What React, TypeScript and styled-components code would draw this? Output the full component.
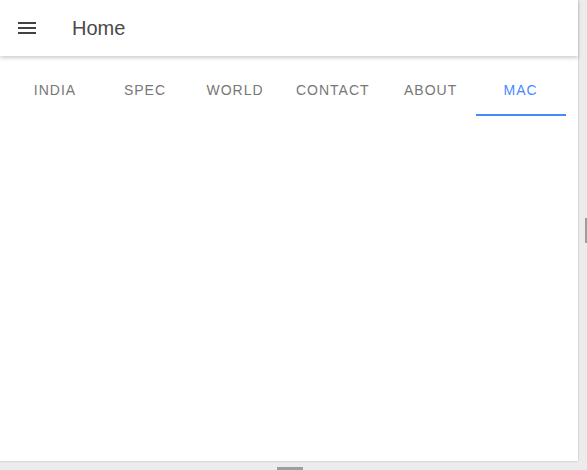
import { useState } from "react";
import styled, { createGlobalStyle } from "styled-components";

const tabs = ["India", "Spec", "World", "Contact", "About", "Mac"];

const GlobalStyle = createGlobalStyle`
   html, body {
      margin: 0;
      padding: 0;
      background: #ececec;
      font-family: "Liberation Sans", Arial, sans-serif;
   }
`;

export default function App() {
   const [activo, setActivo] = useState<number>(5);

   return (
      <Viewport>
         <GlobalStyle />
         <Pantalla>
            <Cabecera>
               <BotonMenu aria-label="menu">
                  <svg width="24" height="24" viewBox="0 0 24 24">
                     <path
                        fill="#424242"
                        d="M3 18h18v-2H3v2zm0-5h18v-2H3v2zm0-7v2h18V6H3z"
                     />
                  </svg>
               </BotonMenu>
               <Titulo>Home</Titulo>
            </Cabecera>
            <BarraTabs>
               {tabs.map((item, i) => (
                  <Tab
                     key={item}
                     $activo={i === activo}
                     onClick={() => setActivo(i)}
                  >
                     {item}
                  </Tab>
               ))}
            </BarraTabs>
         </Pantalla>
         <ThumbVertical />
         <ThumbHorizontal />
      </Viewport>
   );
}

const Viewport = styled.div`
   position: relative;
   width: 588px;
   height: 470px;
   overflow: hidden;
`;

const Pantalla = styled.div`
   width: 578px;
   height: 461px;
   background: #fff;
   box-shadow: 0 0 2px rgba(0, 0, 0, 0.25);
   display: flex;
   flex-direction: column;
`;

const Cabecera = styled.header`
   height: 56px;
   display: flex;
   align-items: center;
   padding-left: 15px;
   background: #fff;
   box-shadow: 0 2px 4px rgba(0, 0, 0, 0.2);
   position: relative;
   z-index: 1;
`;

const BotonMenu = styled.button`
   width: 24px;
   height: 24px;
   padding: 0;
   border: none;
   background: none;
   display: flex;
   margin-right: 33px;
   cursor: pointer;
`;

const Titulo = styled.h1`
   margin: 0;
   font-size: 20px;
   font-weight: 400;
   color: #4a4a4a;
   line-height: 24px;
`;

const BarraTabs = styled.nav`
   display: flex;
   margin-top: 8px;
   padding-left: 10px;
   height: 52px;
`;

const Tab = styled.div<{ $activo: boolean }>`
   min-width: 90px;
   padding: 2px 16px 0;
   box-sizing: border-box;
   display: flex;
   align-items: center;
   justify-content: center;
   text-transform: uppercase;
   font-size: 14px;
   letter-spacing: 1px;
   color: ${(p) => (p.$activo ? "#448aff" : "#777777")};
   border-bottom: 2px solid ${(p) => (p.$activo ? "#448aff" : "transparent")};
   cursor: pointer;
`;

const ThumbVertical = styled.div`
   position: absolute;
   left: 585px;
   top: 218px;
   width: 3px;
   height: 25px;
   background: #9e9e9e;
`;

const ThumbHorizontal = styled.div`
   position: absolute;
   left: 277px;
   top: 467px;
   width: 26px;
   height: 3px;
   background: #9e9e9e;
`;
